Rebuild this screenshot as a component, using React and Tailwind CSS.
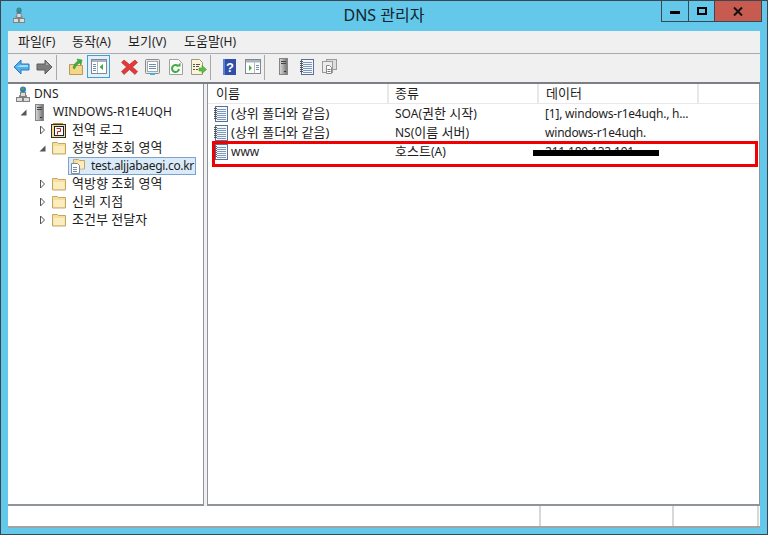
const FONT = "font-['Noto_Sans','Noto_Sans_CJK_KR',sans-serif]";

// Korean runs sit a little wider in the reference than the latin text
const K = ({ children }) => <span className="text-[13px]">{children}</span>;

const DnsIcon = ({ width = 14 }) => (
  <svg width={width} height="17" viewBox="0 0 14 17" preserveAspectRatio="none" className="block">
    <circle cx="7" cy="3.5" r="3" fill="#2f7fb8" />
    <path d="M5 2.500l2-1.500 1.500 1-1 2-2 0z" fill="#4fa24a" />
    <path d="M3.500 11V9.500h7V11" stroke="#808080" fill="none" />
    <rect x="4.500" y="6.500" width="5" height="4" fill="#dcdcdc" stroke="#808080" />
    <rect x="0.500" y="11.500" width="6" height="4" fill="#dcdcdc" stroke="#808080" />
    <rect x="7.500" y="11.500" width="6" height="4" fill="#dcdcdc" stroke="#808080" />
  </svg>
);

const ServerIcon = ({ id }) => (
  <svg width="11" height="17" viewBox="0 0 11 17" className="block">
    <defs>
      <linearGradient id={id} x1="0" x2="1" y1="0" y2="0">
        <stop offset="0" stopColor="#dcdcdc" />
        <stop offset="1" stopColor="#6f6f6f" />
      </linearGradient>
    </defs>
    <rect x="1.500" y="0.500" width="8" height="16" fill={`url(#${id})`} stroke="#858585" />
    <path d="M3 3.500h5M3 5.500h5" stroke="#444" />
    <rect x="6" y="13" width="2" height="1" fill="#333" />
  </svg>
);

const Folder = () => (
  <svg width="16" height="14" viewBox="0 0 16 14" className="block">
    <path d="M1.500 3.500v-2h5l1 1h7v10.500h-13z" fill="#f6df9c" stroke="#c2a764" />
    <path d="M2.500 5h11v7h-11z" fill="#fbedc0" />
  </svg>
);

const LogIcon = () => (
  <svg width="15" height="15" viewBox="0 0 15 15" className="block">
    <rect x="0.500" y="1.500" width="14" height="13" fill="#f4dc92" stroke="#333" />
    <rect x="3.500" y="3.500" width="9" height="9" fill="#fff" stroke="#222" />
    <path d="M5.500 5.500h4v3h-3v3" stroke="#c02020" fill="none" />
    <path d="M2 0.500h10" stroke="#b09040" />
  </svg>
);

const ZoneIcon = () => (
  <svg width="16" height="16" viewBox="0 0 16 16" className="block">
    <path d="M3.500 5V1.500h5l1 1h5V11h-5" fill="#f6df9c" stroke="#c2a764" />
    <path d="M8 3.500h6v7H8z" fill="#fbedc0" />
    <path d="M1.500 5.500h6l2 2v8h-8z" fill="#fff" stroke="#7d8a97" />
    <path d="M3 9.500h4M3 11.500h4M3 13.500h4" stroke="#6f8caf" />
  </svg>
);

const RecordIcon = () => (
  <svg width="14" height="16" viewBox="0 0 14 16" className="block">
    <rect x="1.500" y="0.500" width="12" height="15" fill="#f4f8fc" stroke="#5a6f96" />
    <path d="M3 3.500h9M3 5.500h9M3 7.500h9M3 9.500h9M3 11.500h9M3 13.500h9" stroke="#7d97bd" />
    <path d="M0 2.500h3M0 4.500h3M0 6.500h3M0 8.500h3M0 10.500h3M0 12.500h3" stroke="#555" />
  </svg>
);

const Expand = () => (
  <svg width="7" height="10" viewBox="0 0 7 10" className="block">
    <path d="M1.500 1v8l4-4z" fill="#fff" stroke="#555" />
  </svg>
);

const Collapse = () => (
  <svg width="7" height="7" viewBox="0 0 7 7" className="block">
    <path d="M6.500 0.500v6h-6z" fill="#555" />
  </svg>
);

const BackIcon = () => (
  <svg width="17" height="16" viewBox="0 0 17 16" className="block">
    <path d="M8 1L1 8l7 7v-4h8V5H8z" fill="#4fb0ee" stroke="#2a78bd" />
    <path d="M3 8h12V6H8z" fill="#a5dcfa" />
  </svg>
);

const ForwardIcon = () => (
  <svg width="17" height="16" viewBox="0 0 17 16" className="block">
    <path d="M9 1l7 7-7 7v-4H1V5h8z" fill="#7d7d7d" stroke="#5c5c5c" />
    <path d="M2 6h8V3l3 3z" fill="#a8a8a8" />
  </svg>
);

const FolderUpIcon = () => (
  <svg width="16" height="17" viewBox="0 0 16 17" className="block">
    <path d="M1.500 6.500h5l1 1h7v9h-13z" fill="#f3d68a" stroke="#b99a52" />
    <path d="M5 10c1-4 3-6 5-7l-1-2 5 1-1 5-1.500-2c-2 1-4 3-5 6z" fill="#3fae3f" stroke="#2a8a2a" strokeWidth="0.5" />
  </svg>
);

const ShowTreeIcon = () => (
  <svg width="16" height="15" viewBox="0 0 16 15" className="block">
    <rect x="0.500" y="0.500" width="15" height="14" fill="#fff" stroke="#808890" />
    <rect x="1" y="1" width="14" height="2" fill="#a8b4c0" />
    <path d="M2 5.500h3M2 7.500h3M2 9.500h3M2 11.500h3" stroke="#6f8caf" />
    <path d="M6.500 3v11" stroke="#b0b8c0" />
    <path d="M12 5v6L8.500 8z" fill="#3fae3f" />
  </svg>
);

const DeleteIcon = () => (
  <svg width="17" height="16" viewBox="0 0 17 16" className="block">
    <path d="M3 1l5.500 4.500L14 1l2.500 2.500L11.500 8l5 4.500L14 15.500 8.500 10.500 3 15.500.5 12.500l5-4.500-5-4.500z" fill="#e23a3a" stroke="#b52222" strokeWidth="0.6" />
  </svg>
);

const PropsIcon = () => (
  <svg width="15" height="16" viewBox="0 0 15 16" className="block">
    <rect x="0.500" y="0.500" width="14" height="14" rx="1" fill="#e8e8e8" stroke="#8a8a8a" />
    <rect x="2.500" y="2.500" width="10" height="10" fill="#fff" stroke="#a0a8b0" />
    <path d="M4 5.500h7M4 7.500h7M4 9.500h7" stroke="#6f8caf" />
    <rect x="5" y="14" width="5" height="2" fill="#3fb2e8" />
  </svg>
);

const RefreshIcon = () => (
  <svg width="14" height="16" viewBox="0 0 14 16" className="block">
    <path d="M0.500 0.500h9l4 4v11h-13z" fill="#fafafa" stroke="#a0a0a0" />
    <path d="M10 10a3.500 3.500 0 1 1-1-3" fill="none" stroke="#3fae3f" strokeWidth="2" />
    <path d="M7.500 7.500h4v-4z" fill="#3fae3f" />
  </svg>
);

const ExportIcon = () => (
  <svg width="16" height="16" viewBox="0 0 16 16" className="block">
    <path d="M0.500 0.500h8l3 3v12h-11z" fill="#fbf4d6" stroke="#9a9a8a" />
    <path d="M2 5.500h2M5 5.500h4M2 7.500h2M5 7.500h3M2 10.500h2M5 10.500h2" stroke="#555" />
    <path d="M8 9h3V6.500L15.500 10.500 11 14.500V12H8z" fill="#5dbb46" stroke="#3d8d2a" strokeWidth="0.5" />
  </svg>
);

const HelpIcon = () => (
  <svg width="13" height="16" viewBox="0 0 13 16" className="block">
    <rect width="13" height="16" fill="#2f4fa8" />
    <rect x="0" y="0" width="2" height="16" fill="#5f7fd0" />
    <text x="7" y="13" textAnchor="middle" fontSize="13" fontWeight="700" fill="#fff" fontFamily="Liberation Sans">?</text>
  </svg>
);

const ActionPaneIcon = () => (
  <svg width="16" height="15" viewBox="0 0 16 15" className="block">
    <rect x="0.500" y="0.500" width="15" height="14" fill="#fff" stroke="#808890" />
    <rect x="1" y="1" width="14" height="2.500" fill="#a8b4c0" />
    <path d="M4 6v6l3-3z" fill="#3fae3f" />
    <path d="M9.500 3.500v11" stroke="#b0b8c0" />
    <path d="M11 6.500h3M11 8.500h3M11 10.500h3" stroke="#6f8caf" />
  </svg>
);

const CopyIcon = () => (
  <svg width="15" height="15" viewBox="0 0 15 15" className="block">
    <rect x="4.500" y="0.500" width="10" height="10" fill="#dedede" stroke="#9a9a9a" />
    <rect x="0.500" y="2.500" width="10" height="11" fill="#ececec" stroke="#9a9a9a" />
    <path d="M4.500 6.500h3l2 2v6h-5z" fill="#fff" stroke="#8a8a8a" />
    <path d="M5.500 10.500h3M5.500 12.500h3" stroke="#777" />
  </svg>
);

const ToolButton = ({ children, active }) => (
  <div className={`flex h-[23px] w-[23px] items-center justify-center ${active ? 'border border-[#3f9fd8] bg-[#e3f0fa]' : ''}`}>
    {children}
  </div>
);

const Sep = ({ line = true }) => (
  <div className="flex h-[25px] w-[8px] items-start">
    {line && <div className="h-[25px] w-px bg-[#a8a8a8]" />}
  </div>
);

const TreeRow = ({ left, toggle, icon, label, kr }) => (
  <div className="flex h-[18px] items-center">
    <div className="flex w-[16px] shrink-0 items-center justify-center" style={{ marginLeft: left }}>
      {toggle}
    </div>
    <div className="flex w-[17px] shrink-0 items-center justify-center">{icon}</div>
    <span className={`ml-[5px] whitespace-nowrap ${kr ? 'pb-[2px]' : ''}`}>{label}</span>
  </div>
);

const records = [
  {
    id: 'soa',
    name: <K>(상위 폴더와 같음)</K>,
    type: <>SOA(<K>권한 시작</K>)</>,
    data: '[1], windows-r1e4uqh., h...',
  },
  {
    id: 'ns',
    name: <K>(상위 폴더와 같음)</K>,
    type: <>NS(<K>이름 서버</K>)</>,
    data: 'windows-r1e4uqh.',
  },
  {
    id: 'www',
    name: 'www',
    type: <><K>호스트</K>(A)</>,
    data: '211.189.132.191',
  },
];

const App = () => {
  return (
    <div className={`${FONT} relative flex h-[535px] w-[768px] flex-col overflow-hidden border border-[#3c4650] bg-[#63c8ea] text-[12px] leading-none text-[#1e1e1e]`}>
      {/* title bar */}
      <div className="grid h-[30px] grid-cols-[1fr_auto_1fr]">
        <div className="pl-[12px] pt-[6px]">
          <DnsIcon width={12} />
        </div>
        <div className="pt-[4px] text-[16px] leading-[20px] text-[#14232c]">DNS 관리자</div>
        <div className="flex justify-end pr-[5px]">
          <div className="flex h-[21px] border border-t-0 border-[#3c4650]">
            <div className="flex w-[27px] items-center justify-center border-r border-[#3c4650]">
              <div className="mt-[3px] h-[3px] w-[10px] bg-black" />
            </div>
            <div className="flex w-[26px] items-center justify-center border-r border-[#3c4650]">
              <div className="h-[8px] w-[10px] border-2 border-black" />
            </div>
            <div className="flex w-[46px] items-center justify-center bg-[#c75b50] text-[#111]">
              <svg width="10" height="9" viewBox="0 0 10 9">
                <path d="M1 0.500l8 8M9 0.500l-8 8" stroke="#111" strokeWidth="2" />
              </svg>
            </div>
          </div>
        </div>
      </div>

      <div className="mx-[7px] flex min-h-0 flex-1 flex-col">
        {/* menu */}
        <div className="flex h-[23px] items-center border-b border-[#a9a9b4] bg-[#f0f0f0] pb-[2px] text-[12px]">
          <span className="ml-[10px] w-[54px]"><K>파일</K>(F)</span>
          <span className="w-[56px]"><K>동작</K>(A)</span>
          <span className="w-[56px]"><K>보기</K>(V)</span>
          <span><K>도움말</K>(H)</span>
        </div>

        {/* toolbar */}
        <div className="flex h-[30px] items-start border-b-2 border-[#7c7f84] bg-[#f0f0f0] pl-[2px] pt-[1px]">
          <ToolButton><BackIcon /></ToolButton>
          <ToolButton><ForwardIcon /></ToolButton>
          <Sep />
          <ToolButton><FolderUpIcon /></ToolButton>
          <ToolButton active><ShowTreeIcon /></ToolButton>
          <Sep line={false} />
          <ToolButton><DeleteIcon /></ToolButton>
          <ToolButton><PropsIcon /></ToolButton>
          <ToolButton><RefreshIcon /></ToolButton>
          <ToolButton><ExportIcon /></ToolButton>
          <Sep />
          <ToolButton><HelpIcon /></ToolButton>
          <ToolButton><ActionPaneIcon /></ToolButton>
          <Sep />
          <ToolButton><ServerIcon id="srv-tool" /></ToolButton>
          <ToolButton><RecordIcon /></ToolButton>
          <ToolButton><CopyIcon /></ToolButton>
        </div>

        {/* panes */}
        <div className="flex min-h-0 flex-1 gap-[3px] bg-[#f0f0f0]">
          <div className="w-[196px] shrink-0 border-r border-b-2 border-[#8f9499] bg-white pt-px">
            <div className="flex h-[18px] items-center pl-[8px]">
              <DnsIcon />
              <span className="ml-[4px]">DNS</span>
            </div>
            <TreeRow left="7px" toggle={<Collapse />} icon={<ServerIcon id="srv-tree" />} label="WINDOWS-R1E4UQH" />
            <TreeRow kr left="26px" toggle={<Expand />} icon={<LogIcon />} label={<K>전역 로그</K>} />
            <TreeRow kr left="26px" toggle={<Collapse />} icon={<Folder />} label={<K>정방향 조회 영역</K>} />
            <div className="ml-[60px] mr-[7px] flex h-[18px] items-center border border-[#7da2ce] bg-[#d9ebf9] pl-[1px]">
              <ZoneIcon />
              <span className="ml-[5px] whitespace-nowrap tracking-[-0.3px]">test.aljjabaegi.co.kr</span>
            </div>
            <TreeRow kr left="26px" toggle={<Expand />} icon={<Folder />} label={<K>역방향 조회 영역</K>} />
            <TreeRow kr left="26px" toggle={<Expand />} icon={<Folder />} label={<K>신뢰 지점</K>} />
            <TreeRow kr left="26px" toggle={<Expand />} icon={<Folder />} label={<K>조건부 전달자</K>} />
          </div>

          <div className="flex min-w-0 flex-1 flex-col border-r border-b-2 border-l border-[#8f9499] bg-white">
            <div className="flex h-[20px] items-center border-b border-[#e8e8e8]">
              <div className="flex h-full w-[181px] items-center border-r-2 border-[#e8e8e8] pl-[8px]"><K>이름</K></div>
              <div className="flex h-full w-[150px] items-center border-r-2 border-[#e8e8e8] pl-[6px]"><K>종류</K></div>
              <div className="flex h-full w-[160px] items-center border-r-2 border-[#e8e8e8] pl-[7px]"><K>데이터</K></div>
            </div>
            {records.map((r) => (
              <div key={r.id} className="flex h-[19px] items-center">
                <div className="flex w-[181px] items-center pl-[6px]">
                  <RecordIcon />
                  <span className="ml-[3px] whitespace-nowrap">{r.name}</span>
                </div>
                <div className="w-[150px] whitespace-nowrap pl-[6px]">{r.type}</div>
                <div className="whitespace-nowrap pl-[6px] tracking-[-0.2px]">{r.data}</div>
              </div>
            ))}
          </div>
        </div>

        {/* status bar */}
        <div className="flex h-[22px] border-b-2 border-[#a3a3a3] bg-white">
          <div className="flex-1 border-r-2 border-[#d8d8d8]" />
          <div className="w-[133px] border-r-2 border-[#d8d8d8]" />
          <div className="w-[85px] border-r-2 border-[#d8d8d8]" />
          <div className="w-px" />
        </div>
        <div className="h-[6px]" />
      </div>

      {/* annotation drawn over the screenshot */}
      <div className="absolute left-[211px] top-[140px] h-[26px] w-[546px] border-[3px] border-[#f00000]" />
      <div className="absolute left-[532px] top-[149px] h-[6px] w-[126px] bg-black" />
    </div>
  );
};

export default App;
